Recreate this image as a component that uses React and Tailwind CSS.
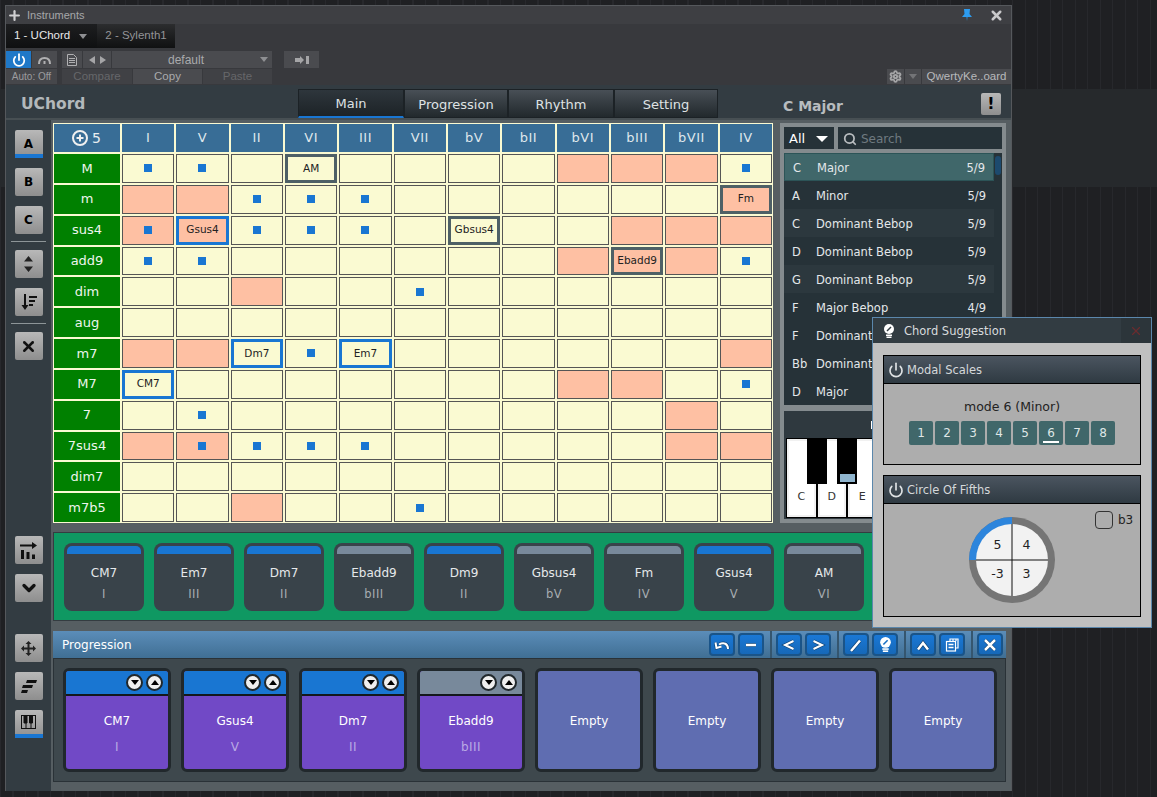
import React from "react";
import { Plus, X, Search, Power, ChevronDown, Settings } from "lucide-react";

const COLS = ["I", "V", "II", "VI", "III", "VII", "bV", "bII", "bVI", "bIII", "bVII", "IV"];

// p = peach, d = dot, g/b = selected chord with gray or blue frame
const ROWS = [
  { name: "M", cells: { I: "d", V: "d", VI: "g:AM", bVI: "p", bIII: "p", bVII: "p", IV: "d" } },
  { name: "m", cells: { I: "p", V: "p", II: "d", VI: "d", III: "d", IV: "gp:Fm" } },
  { name: "sus4", cells: { I: "pd", V: "bp:Gsus4", II: "d", VI: "d", III: "d", bV: "g:Gbsus4", bIII: "p", bVII: "p", IV: "p" } },
  { name: "add9", cells: { I: "d", V: "d", bVI: "p", bIII: "gp:Ebadd9", bVII: "p", IV: "d" } },
  { name: "dim", cells: { II: "p", VII: "d" } },
  { name: "aug", cells: {} },
  { name: "m7", cells: { I: "p", V: "p", II: "b:Dm7", VI: "d", III: "b:Em7", IV: "p" } },
  { name: "M7", cells: { I: "b:CM7", bVI: "p", bIII: "p", IV: "d" } },
  { name: "7", cells: { V: "d", bVII: "p" } },
  { name: "7sus4", cells: { I: "p", V: "pd", II: "d", VI: "d", III: "d", bVII: "p", IV: "p" } },
  { name: "dim7", cells: {} },
  { name: "m7b5", cells: { II: "p", VII: "d" } },
];

const SCALES = [
  ["C", "Major", "5/9"],
  ["A", "Minor", "5/9"],
  ["C", "Dominant Bebop", "5/9"],
  ["D", "Dominant Bebop", "5/9"],
  ["G", "Dominant Bebop", "5/9"],
  ["F", "Major Bebop", "4/9"],
  ["F", "Dominant Bebop", "4/9"],
  ["Bb", "Dominant Bebop", "4/9"],
  ["D", "Major", "4/9"],
];

const PICKS = [
  ["CM7", "I", true],
  ["Em7", "III", true],
  ["Dm7", "II", true],
  ["Ebadd9", "bIII", false],
  ["Dm9", "II", true],
  ["Gbsus4", "bV", false],
  ["Fm", "IV", false],
  ["Gsus4", "V", true],
  ["AM", "VI", false],
];

const PROGRESSION = [
  ["CM7", "I", true],
  ["Gsus4", "V", true],
  ["Dm7", "II", true],
  ["Ebadd9", "bIII", false],
];

const Cell = ({ value }) => {
  if (!value) return <div className="border border-[#555] bg-[#fafad2]" />;
  const [kind, label] = value.split(":");
  const peach = kind.includes("p");
  const bg = peach ? "bg-[#fec0a3]" : "bg-[#fafad2]";
  if (label) {
    const frame = kind.startsWith("b") ? "border-[#1976d2]" : "border-[#4e6066]";
    return (
      <div className={`flex items-center justify-center border-[3px] ${frame} ${bg} text-[10.5px] text-[#222]`}>{label}</div>
    );
  }
  return (
    <div className={`flex items-center justify-center border border-[#555] ${bg}`}>
      {kind.includes("d") && <div className="h-2 w-2 bg-[#1976d2]" />}
    </div>
  );
};

const SideButton = ({ children, active, className = "" }) => (
  <div className={`relative mx-auto flex h-7 w-7 items-center justify-center rounded-[2px] bg-gradient-to-b from-[#b8b8b8] to-[#8e8e8e] text-[12px] font-bold text-black ${className}`}>
    {children}
    {active && <div className="absolute bottom-0 left-0 right-0 h-1 bg-[#1976d2]" />}
  </div>
);

const ToolButton = ({ children }) => (
  <div className="flex h-[23px] w-[26px] items-center justify-center rounded-[4px] border-2 border-[#1a5488] bg-gradient-to-b from-[#1a78d6] to-[#1668b8]">
    {children}
  </div>
);

// white stroke with a thin dark edge, as the toolbar glyphs have
const ToolIcon = ({ d, w = 2 }) => (
  <svg width="16" height="14" viewBox="0 0 16 14" fill="none" strokeLinejoin="miter">
    <path d={d} stroke="#0e3f6e" strokeWidth={w + 1.2} />
    <path d={d} stroke="white" strokeWidth={w} />
  </svg>
);

const Bulb = ({ size = 14, needle = "#333c42" }) => (
  <svg width={size} height={size} viewBox="0 0 14 14">
    <circle cx="7" cy="5" r="5" fill="white" />
    <path d="M5 7l4-4" stroke={needle} strokeWidth="1.500" />
    <rect x="4" y="10.500" width="6" height="1.500" fill="white" />
    <rect x="4.500" y="12.500" width="5" height="1.500" fill="white" />
  </svg>
);

const Sep = () => <div className="ml-[6px] mr-[4px] h-[27px] w-[2px] bg-[#35566f]" />;

const PanelHead = ({ title }) => (
  <div className="flex h-[28px] items-center gap-[3px] border-b border-black bg-gradient-to-b from-[#4b5560] to-[#2f3a42] pl-[4px] text-[11.5px] text-[#d5d8da]">
    <Power size={16} strokeWidth={2.5} className="text-[#dfe2e4]" />
    <span className="pt-[2px]">{title}</span>
  </div>
);

const Keyboard = () => (
  <div className="relative flex h-[80px] w-[210px] gap-[2px] overflow-hidden border border-black bg-black">
    {["C", "D", "E", "F", "G", "A", "B"].map((k) => (
      <div key={k} className="flex h-full w-[28.5px] shrink-0 items-end justify-center border-2 border-[#f1f1f1] bg-white pb-[10px] text-[11px] text-[#333]">
        {k}
      </div>
    ))}
    <div className="absolute left-[20px] top-0 h-[45px] w-[20px] bg-black" />
    <div className="absolute left-[50px] top-0 flex h-[45px] w-[20px] items-end justify-center bg-black pb-[2px]">
      <div className="h-2 w-[15px] bg-[#8fb4cd]" />
    </div>
  </div>
);

const App = () => {
  return (
    <div
      className="relative h-[797px] w-[1157px] overflow-hidden bg-[#1f2023] bg-[linear-gradient(to_bottom,transparent_89px,#26292c_89px,#26292c_187px,transparent_187px),repeating-linear-gradient(to_right,#27282c_0,#27282c_1px,transparent_1px,transparent_12.5px)] pl-[5px] pt-[5px] font-['DejaVu_Sans',sans-serif]"
    >
      {/* host window */}
      <div className="flex h-[786px] w-[1007px] flex-col border border-b-0 border-[#55585c] bg-[#38393d]">
        <div className="flex h-[18px] items-center bg-[#3e3f43] pl-px pr-[7px] font-['Liberation_Sans',sans-serif] text-[11px] text-[#a6a7aa]">
          <Plus size={15} strokeWidth={3.5} className="text-[#d0d0d2]" />
          <span className="ml-[5px]">Instruments</span>
          <svg className="ml-auto" width="10" height="12" viewBox="0 0 10 12" fill="#2d9cf0"><path d="M2 0h6l-.5 5L10 8H5.500L5 12l-.5-4H0l2.500-3z" /></svg>
          <X size={15} strokeWidth={4} className="ml-[17px] text-[#c8c8ca]" />
        </div>

        <div className="flex h-[24px] font-['Liberation_Sans',sans-serif] text-[11.5px]">
          <div className="flex w-[91px] items-center gap-[9px] bg-gradient-to-b from-[#1d1e20] to-[#0f1011] pl-[8px] text-[#e8e8ea]">
            1 - UChord
            <div className="h-0 w-0 border-x-[4px] border-t-[5px] border-x-transparent border-t-[#8e8f92]" />
          </div>
          <div className="flex w-[78px] items-center justify-center bg-gradient-to-b from-[#2c2d2f] to-[#101112] text-[#939497]">2 - Sylenth1</div>
        </div>

        <div className="flex h-[37px] flex-col gap-px pt-[3px] font-['Liberation_Sans',sans-serif] text-[11.5px]">
          <div className="flex h-[17px] gap-px">
            <div className="flex w-[25px] items-center justify-center bg-[#1f78c8]"><Power size={14} strokeWidth={3} className="text-white" /></div>
            <div className="flex w-[25px] items-center justify-center bg-[#4a4b4f]">
              <svg width="15" height="8" viewBox="0 0 15 8" fill="none" stroke="#b0b0b2" strokeWidth="2"><path d="M2 8C2 4 4.500 2 7.500 2S13 4 13 8" /><path d="M7.500 5v3" /></svg>
            </div>
            <div className="ml-[4px] flex w-[20px] items-center justify-center bg-[#4a4b4f]">
              <svg width="10" height="12" viewBox="0 0 10 12" fill="none" stroke="#b0b0b2" strokeWidth="1"><path d="M.5.5h6l3 3v8h-9zM2 4.500h6M2 6.500h6M2 8.500h6" /></svg>
            </div>
            <div className="flex w-[28px] items-center justify-around bg-[#4a4b4f] px-[3px]">
              <div className="h-0 w-0 border-y-[4px] border-r-[6px] border-y-transparent border-r-[#a5a5a7]" />
              <div className="h-0 w-0 border-y-[4px] border-l-[6px] border-y-transparent border-l-[#a5a5a7]" />
            </div>
            <div className="relative flex w-[160px] items-center justify-center bg-[#4a4b4f] pr-[12px] text-[12px] text-[#a9aaac]">
              default
              <div className="absolute right-[4px] h-0 w-0 border-x-[4px] border-t-[5px] border-x-transparent border-t-[#8e8f92]" />
            </div>
            <div className="ml-[11px] flex w-[35px] items-center justify-center gap-px bg-[#4a4b4f]">
              <svg width="14" height="8" viewBox="0 0 14 8" fill="#a5a5a7"><path d="M0 2h5V0l4 4-4 4V6H0zM11 0h3v8h-3z" /></svg>
            </div>
          </div>
          <div className="flex h-[15px] gap-px">
            <div className="flex w-[51px] items-center justify-center bg-[#46474b] text-[10px] text-[#9b9c9f]">Auto: Off</div>
            <div className="ml-[4px] flex w-[70px] items-center justify-center bg-[#404145] text-[#66676a]">Compare</div>
            <div className="flex w-[69px] items-center justify-center bg-[#4a4b4f] text-[#a9aaac]">Copy</div>
            <div className="flex w-[69px] items-center justify-center bg-[#404145] text-[#66676a]">Paste</div>
            <div className="ml-auto flex w-[17px] items-center justify-center bg-[#4a4b4f]"><Settings size={13} strokeWidth={3.5} className="text-[#a5a5a7]" /></div>
            <div className="flex w-[16px] items-center justify-center bg-[#4a4b4f]">
              <div className="h-0 w-0 border-x-[4px] border-t-[5px] border-x-transparent border-t-[#737477]" />
            </div>
            <div className="flex w-[89px] items-center justify-center bg-[#4a4b4f] text-[#b8b9bc]">QwertyKe..oard</div>
          </div>
        </div>

        {/* plugin header */}
        <div className="flex h-[35px] border-b-2 border-[#474f53] bg-[#333c42] pt-[4px]">
          <div className="w-[292px] pl-[15px] pt-[2px] text-[15.5px] font-bold leading-[26px] text-[#b3b8bb]">UChord</div>
          <div className="flex h-[29px] text-[13px] text-[#dfe2e4]">
            <div className="flex w-[106px] items-center justify-center border border-b-[2px] border-[#1c2226] border-b-[#1976d2] bg-gradient-to-b from-[#2e363c] to-[#1d2327] pt-[2px]">Main</div>
            <div className="flex w-[104px] items-center justify-center border border-[#1c2226] bg-gradient-to-b from-[#484f56] to-[#22292d] pt-[2px]">Progression</div>
            <div className="flex w-[106px] items-center justify-center border border-[#1c2226] bg-gradient-to-b from-[#484f56] to-[#22292d] pt-[2px]">Rhythm</div>
            <div className="flex w-[104px] items-center justify-center border border-[#1c2226] bg-gradient-to-b from-[#484f56] to-[#22292d] pt-[2px]">Setting</div>
          </div>
          <div className="ml-[65px] flex-1 pt-[4px] text-[14px] font-bold leading-[26px] text-[#b8bcbf]">C Major</div>
          <div className="mr-[10px] mt-[4px] flex h-[22px] w-[20px] items-center justify-center rounded-[2px] bg-gradient-to-b from-[#b8b8b8] to-[#8e8e8e] text-[16px] font-bold text-black">!</div>
        </div>

        {/* plugin body */}
        <div className="flex flex-1">
          <div className="flex w-[45px] flex-col bg-[#333c42] pt-[10px]">
            <SideButton active>A</SideButton>
            <SideButton className="mt-[10px]">B</SideButton>
            <SideButton className="mt-[10px]">C</SideButton>
            <div className="mx-[5px] mb-[8px] mt-[7px] h-px bg-[#8d9598]" />
            <SideButton>
              <svg width="11" height="16" viewBox="0 0 11 16" fill="#222"><path d="M5.500 0L10 5.500H1zM1 10.500h9L5.500 16z" /></svg>
            </SideButton>
            <SideButton className="mt-[10px]">
              <svg width="16" height="16" viewBox="0 0 16 16" fill="#111"><path d="M3 0h2v11h2.500L4 16 .5 11H3zM8 2h8v2H8zM8 6h6v2H8zM8 10h4v2H8z" /></svg>
            </SideButton>
            <div className="mx-[5px] mb-[8px] mt-[7px] h-px bg-[#8d9598]" />
            <SideButton>
              <X size={17} strokeWidth={3.5} className="text-[#111]" />
            </SideButton>
            <SideButton className="mt-[176px]">
              <svg width="17" height="17" viewBox="0 0 17 17" fill="#111"><path d="M0 2.500h12V0l5 3.500L12 7V4.500H0zM1 8h3v9H1zM6.500 10h3v7h-3zM12 12.500h3V17h-3z" /></svg>
            </SideButton>
            <SideButton className="mt-[10px]">
              <ChevronDown size={20} strokeWidth={4} className="text-[#111]" />
            </SideButton>
            <SideButton className="mt-[32px]">
              <svg width="15" height="15" viewBox="0 0 15 15" fill="#222"><path d="M7.500 0l3 3H8.500v3.500H12V4.500l3 3-3 3V8.500H8.500V12h2l-3 3-3-3h2V8.500H3v2l-3-3 3-3v2h3.500V3h-2z" /></svg>
            </SideButton>
            <SideButton className="mt-[10px]">
              <svg width="16" height="13" viewBox="0 0 16 13" fill="#111"><path d="M6 0h10l-1 3H5zM2 5h10l-1 3H1zM1 10h6l-1 3H0z" /></svg>
            </SideButton>
            <SideButton active className="mt-[10px]">
              <svg className="mb-[4px]" width="15" height="14" viewBox="0 0 15 14" fill="none" stroke="#111"><rect x=".500" y=".500" width="14" height="13" /><path d="M5 0v14M10 0v14" /><path d="M3 0h3v8H3zM8.500 0h3v8h-3z" fill="#111" /></svg>
            </SideButton>
          </div>

          <div className="flex flex-1 flex-col bg-[#565e62] pl-[2px] pr-[5px] pt-[3px]">
            <div className="flex h-[400px] gap-[7px]">
              {/* chord matrix */}
              <div className="grid w-[720px] grid-cols-[66px_repeat(12,1fr)] grid-rows-[28px_repeat(12,1fr)] gap-[2px] bg-[#fafad2] p-px">
                <div className="flex items-center justify-center gap-[4px] bg-[#386d96] pr-px text-[14px] text-[#e8edf0]">
                  <svg width="16" height="16" viewBox="0 0 16 16" fill="none" stroke="#f0f0f0" strokeWidth="2"><circle cx="8" cy="8" r="7" /><path d="M4.500 8h7M8 4.500v7" /></svg>
                  5
                </div>
                {COLS.map((c) => (
                  <div key={c} className="flex items-center justify-center bg-[#386d96] text-[13px] tracking-[0.5px] text-[#dfe7ec]">{c}</div>
                ))}
                {ROWS.map((row) => (
                  <React.Fragment key={row.name}>
                    <div className="flex items-center justify-center bg-[#008000] text-[13px] text-[#eef5ee]">{row.name}</div>
                    {COLS.map((c) => (
                      <Cell key={c} value={row.cells[c]} />
                    ))}
                  </React.Fragment>
                ))}
              </div>

              {/* scale list */}
              <div className="flex w-[226px] flex-col bg-[#848b8e] p-[4px] pb-[4px]">
                <div className="flex h-[22px] gap-[4px]">
                  <div className="flex w-[50px] items-center justify-between bg-[#263238] px-[5px] pt-[2px] text-[13px] text-white">
                    All
                    <div className="mr-[1px] h-0 w-0 border-x-[6px] border-t-[6px] border-x-transparent border-t-white" />
                  </div>
                  <div className="flex flex-1 items-center gap-[4px] bg-[#263238] pl-[5px] pt-[1px] text-[12px] text-[#6f7a80]">
                    <Search size={14} strokeWidth={3} className="text-[#b8bcbf]" />
                    <span className="pt-px">Search</span>
                  </div>
                </div>
                <div className="mt-[4px] flex h-[252px] bg-[#263238] text-[11.5px] text-[#e4e8ea]">
                  <div className="w-[210px]">
                    {SCALES.map(([root, name, count], i) => (
                      <div
                        key={i}
                        className={`flex h-[28px] items-center pl-[8px] pr-[8px] pt-[3px] ${i === 0 ? "border border-[#2c5457] bg-[#40676a]" : ""} ${i === 2 || i === 4 ? "bg-[#2c383e]" : ""}`}
                      >
                        <span className="w-[24px]">{root}</span>
                        <span>{name}</span>
                        <span className="ml-auto">{count}</span>
                      </div>
                    ))}
                  </div>
                  <div className="ml-[1px] mt-[3px] h-[19px] w-[6px] rounded-[3px] bg-[#1d4a6e]" />
                </div>
                <div className="mt-[6px] flex-1 bg-[#2f393f] pl-[2px] pt-[10px]">
                  <div className="ml-[85px] h-[8px] w-px bg-white" />
                  <div className="mt-[9px]">
                    <Keyboard />
                  </div>
                </div>
              </div>
            </div>

            {/* picked chords */}
            <div className="mt-[9px] flex h-[89px] gap-[10px] border border-[#343c41] bg-[#0f9862] pl-[10px] pt-[10px]">
              {PICKS.map(([name, degree, on], i) => (
                <div key={i} className="h-[68px] w-[80px] rounded-[8px] bg-[#39434a] px-[3px] pt-[3px]">
                  <div className={`h-[8px] rounded-t-[5px] ${on ? "bg-[#1976d2]" : "bg-[#78899b]"}`} />
                  <div className="mt-[10px] text-center text-[12px] text-[#e6e9eb]">{name}</div>
                  <div className="mt-[4px] text-center text-[11.5px] tracking-[0.5px] text-[#a7adb1]">{degree}</div>
                </div>
              ))}
            </div>

            {/* progression */}
            <div className="mt-[10px] flex h-[151px] flex-col">
              <div className="flex h-[27px] items-center bg-gradient-to-b from-[#5b8db9] to-[#406f94] pl-[9px] text-[12px] text-white">
                Progression
                <div className="ml-auto flex items-center pr-[3px]">
                  <div className="flex gap-[3px]">
                    <ToolButton><ToolIcon d="M14 11C14 6 10 3.500 5 6.500M1.500 4.500L2.500 10L7.500 8.500" /></ToolButton>
                    <ToolButton><ToolIcon d="M3 7h10" w={2.500} /></ToolButton>
                  </div>
                  <Sep />
                  <div className="flex gap-[3px]">
                    <ToolButton><ToolIcon d="M12.500 3L4 7l8.500 4" /></ToolButton>
                    <ToolButton><ToolIcon d="M3.500 3L12 7l-8.500 4" /></ToolButton>
                  </div>
                  <Sep />
                  <div className="flex gap-[3px]">
                    <ToolButton><ToolIcon d="M3 13L12 2.500" w={2.500} /></ToolButton>
                    <ToolButton><Bulb size={15} needle="#1a70c4" /></ToolButton>
                  </div>
                  <Sep />
                  <div className="flex gap-[3px]">
                    <ToolButton><ToolIcon d="M3 11.500L8 5l5 6.500" w={2.500} /></ToolButton>
                    <ToolButton>
                      <svg width="14" height="14" viewBox="0 0 14 14" fill="none" stroke="white" strokeWidth="1.200"><path d="M5 3V1h8v9h-2" /><path d="M8 3V1M11 3V1" /><rect x="1.500" y="3.500" width="9" height="9.500" /><path d="M3.500 6.500h5M3.500 9.500h5" strokeWidth="1.500" /></svg>
                    </ToolButton>
                  </div>
                  <Sep />
                  <ToolButton><ToolIcon d="M3 2l10 10M13 2L3 12" w={2.500} /></ToolButton>
                </div>
              </div>
              <div className="flex flex-1 gap-[10px] border border-[#2a3237] bg-[#3e484d] pl-[9px] pt-[9px]">
                {PROGRESSION.map(([name, degree, on], i) => (
                  <div key={i} className="flex h-[104px] w-[108px] flex-col overflow-hidden rounded-[6px] border-[3px] border-[#21282c] bg-[#7149c6]">
                    <div className={`flex h-[25px] items-center justify-end gap-[3px] border-b-2 border-[#14181b] pr-[5px] ${on ? "bg-[#1976d2]" : "bg-[#78899b]"}`}>
                      <div className="flex h-[17px] w-[17px] items-center justify-center rounded-full border-2 border-[#21282c] bg-[#efefef]">
                        <div className="h-0 w-0 border-x-[4px] border-t-[5px] border-x-transparent border-t-black" />
                      </div>
                      <div className="flex h-[17px] w-[17px] items-center justify-center rounded-full border-2 border-[#21282c] bg-[#efefef]">
                        <div className="h-0 w-0 border-x-[4px] border-b-[5px] border-x-transparent border-b-black" />
                      </div>
                    </div>
                    <div className="mt-[16px] text-center text-[12px] text-white">{name}</div>
                    <div className="mt-[8px] text-center text-[12px] tracking-[0.5px] text-[#b9a9e4]">{degree}</div>
                  </div>
                ))}
                {[0, 1, 2, 3].map((i) => (
                  <div key={i} className="flex h-[104px] w-[108px] items-center justify-center rounded-[6px] border-[3px] border-[#21282c] bg-[#5f6db1] pt-[2px] text-[12px] text-white">Empty</div>
                ))}
              </div>
            </div>
          </div>
        </div>
      </div>

      {/* floating dialog */}
      <div className="absolute left-[872px] top-[317px] flex h-[311px] w-[280px] flex-col border border-[#5b87ac] bg-[#c0c0c0]">
        <div className="flex h-[25px] items-center bg-[#323c42] pl-[9px] text-[11.5px] text-[#d8dbdd]">
          <Bulb />
          <span className="ml-[8px] pt-[2px]">Chord Suggestion</span>
          <div className="ml-auto flex h-full w-[30px] items-center justify-center bg-[#2c353a]">
            <X size={14} strokeWidth={2} className="text-[#6a2b2e]" />
          </div>
        </div>
        <div className="flex flex-1 flex-col gap-[10px] px-[10px] pt-[12px]">
          <div className="flex h-[110px] flex-col border border-black bg-[#adadad]">
            <PanelHead title="Modal Scales" />
            <div className="flex flex-1 flex-col items-center pt-[14px] text-[12.5px] text-[#222]">
              mode 6 (Minor)
              <div className="mt-[4px] flex gap-[2px]">
                {[1, 2, 3, 4, 5, 6, 7, 8].map((n) => (
                  <div key={n} className="relative flex h-[24px] w-[24px] items-center justify-center rounded-[2px] bg-[#40676a] text-[12px] text-[#dfe6e6]">
                    {n}
                    {n === 6 && <div className="absolute bottom-[2px] left-[4px] right-[4px] h-[2px] bg-white" />}
                  </div>
                ))}
              </div>
            </div>
          </div>
          <div className="flex h-[142px] flex-col border border-black bg-[#adadad]">
            <PanelHead title="Circle Of Fifths" />
            <div className="relative flex flex-1 justify-center pt-[13px]">
              <svg width="86" height="86" viewBox="0 0 86 86">
                <circle cx="43" cy="43" r="43" fill="#757575" />
                <path d="M43 43V0A43 43 0 0 0 0 43z" fill="#2d85dc" />
                <circle cx="43" cy="43" r="36" fill="#f2f2f2" />
                <path d="M43 7v72M7 43h72" stroke="#111" strokeWidth="1" />
              </svg>
              <div className="absolute left-[85px] top-[13px] grid h-[86px] w-[86px] grid-cols-2 grid-rows-2 place-items-center p-[14px] text-[12.5px] text-[#222]">
                <span>5</span>
                <span>4</span>
                <span>-3</span>
                <span>3</span>
              </div>
              <div className="absolute left-[211px] top-[7px] flex items-center gap-[5px] text-[12px] text-[#222]">
                <div className="h-[18px] w-[18px] rounded-[4px] border border-[#333]" />
                b3
              </div>
            </div>
          </div>
        </div>
      </div>
    </div>
  );
};

export default App;
